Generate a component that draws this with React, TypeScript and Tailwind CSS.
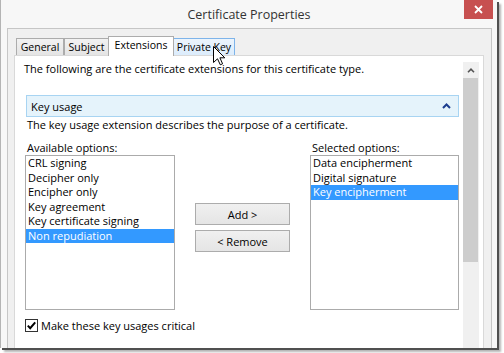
import React from 'react';

const available = ['CRL signing', 'Decipher only', 'Encipher only', 'Key agreement', 'Key certificate signing', 'Non repudiation'];
const chosen = ['Data encipherment', 'Digital signature', 'Key encipherment'];

const OptionList: React.FC<{ items: string[]; active: string; className: string }> = ({ items, active, className }) => (
  <div className={`h-[155px] border border-[#ababab] bg-white overflow-hidden ${className}`}>
    {items.map((item) => (
      <div
        key={item}
        className={`h-[14.5px] leading-[14.5px] pl-[2px] whitespace-nowrap ${item === active ? 'bg-[#3399ff] text-white' : 'text-black'}`}
      >
        {item}
      </div>
    ))}
  </div>
);

const Cursor = () => (
  <svg className="absolute left-[212px] top-[46px]" width="13" height="20" viewBox="0 0 13 20">
    <path d="M0.5 0.5 L0.5 16.5 L4.5 12.8 L7.3 18.8 L9.6 17.8 L6.9 11.8 L11.8 11.8 Z" fill="#fff" stroke="#000" strokeWidth="1" strokeLinejoin="round" />
  </svg>
);

export default function App() {
  return (
    <div className="w-[504px] h-[353px] bg-white font-['Open_Sans',sans-serif] text-[11px] text-black overflow-hidden">
      {/* dialog window, cropped at the bottom */}
      <div className="relative w-[497px] h-[348px] border-l border-[#b4b4b4] bg-[#f7f7f7] flex flex-col overflow-hidden shadow-[2px_2px_0_#505050,4px_4px_2px_rgba(0,0,0,0.3)]">
        {/* Title bar */}
        <div className="relative h-[28px] shrink-0 flex justify-center pt-[5px]">
          <span className="text-[12.5px] leading-[20px] text-[#333]">Certificate Properties</span>
          <div className="absolute right-[4px] top-0 w-[29px] h-[19px] bg-[#c75050] flex items-center justify-center">
            <svg width="9" height="9" viewBox="0 0 9 9">
              <path d="M1 1 L8 8 M8 1 L1 8" stroke="#fff" strokeWidth="1.8" />
            </svg>
          </div>
        </div>

        {/* Client area */}
        <div className="ml-[6px] w-[485px] h-[400px] shrink-0 border border-[#c6c6c6] bg-[#f0f0f0] flex flex-col pt-[7px]">
          {/* Tabs */}
          <div className="flex items-end h-[20px] ml-[8px] shrink-0 text-[10.5px]">
            <div className="w-[48px] h-[18px] border border-[#acacac] bg-linear-to-b from-[#f2f2f2] to-[#e4e4e4] flex items-center justify-center leading-none">
              General
            </div>
            <div className="w-[45px] h-[18px] border border-[#acacac] bg-linear-to-b from-[#f2f2f2] to-[#e4e4e4] flex items-center justify-center leading-none">
              Subject
            </div>
            <div className="relative z-10 -ml-px w-[66px] h-[20px] border border-b-0 border-[#acacac] bg-white flex items-center justify-center pb-[2px] leading-none">
              Extensions
            </div>
            <div className="-ml-px w-[62px] h-[18px] border border-[#7eb4ea] bg-linear-to-b from-[#ecf4fc] to-[#dcecfc] flex items-center justify-center leading-none">
              Private Key
            </div>
          </div>

          {/* Tab panel */}
          <div className="-mt-px ml-[6px] w-[470px] h-[400px] shrink-0 border border-[#d9d9d9] bg-white flex pt-[5px]">
            <div className="w-[448px] pl-[10px] pr-[4px] flex flex-col">
              <div className="leading-[15px] -ml-px whitespace-nowrap">
                The following are the certificate extensions for this certificate type.
              </div>

              <div className="mt-[19px] ml-px h-[22px] border border-[#a8d4f2] bg-[#e5f3fb] flex items-center justify-between pl-[4px] pr-[7px]">
                <span className="leading-none">Key usage</span>
                <svg width="9" height="6" viewBox="0 0 9 6">
                  <path d="M1 5 L4.5 1.5 L8 5" fill="none" stroke="#1c3d8f" strokeWidth="2" />
                </svg>
              </div>

              <div className="leading-[15px] ml-[2px] whitespace-nowrap">
                The key usage extension describes the purpose of a certificate.
              </div>

              <div className="mt-[8px] flex">
                <div className="flex flex-col">
                  <div className="leading-[15px] ml-[2px]">Available options:</div>
                  <OptionList items={available} active="Non repudiation" className="w-[150px]" />
                </div>

                <div className="ml-[20px] w-[95px] pt-[63px] flex flex-col gap-[5px]">
                  <button className="h-[22px] border border-[#acacac] bg-linear-to-b from-[#f0f0f0] to-[#e5e5e5] leading-none text-black">
                    Add &gt;
                  </button>
                  <button className="h-[22px] border border-[#acacac] bg-linear-to-b from-[#f0f0f0] to-[#e5e5e5] leading-none text-black">
                    &lt; Remove
                  </button>
                </div>

                <div className="ml-[20px] flex flex-col">
                  <div className="leading-[15px] ml-[2px]">Selected options:</div>
                  <OptionList items={chosen} active="Key encipherment" className="w-[149px]" />
                </div>
              </div>

              <div className="mt-[8px] flex items-center gap-[3px]">
                <div className="w-[13px] h-[13px] border border-[#333] bg-white flex items-center justify-center">
                  <svg width="11" height="11" viewBox="0 0 11 11">
                    <path d="M1.8 5.6 L4.2 8.2 L9.2 2.4" fill="none" stroke="#000" strokeWidth="2" />
                  </svg>
                </div>
                <span className="leading-[15px]">Make these key usages critical</span>
              </div>
            </div>

            {/* Scrollbar */}
            <div className="w-[16px] mt-px bg-[#f0f0f0] flex flex-col">
              <div className="h-[16px] flex items-center justify-center">
                <svg width="8" height="5" viewBox="0 0 8 5">
                  <path d="M1 4.2 L4 1.2 L7 4.2" fill="none" stroke="#555" strokeWidth="1.6" />
                </svg>
              </div>
              <div className="h-[184px] w-[15px] bg-[#cdcdcd]" />
            </div>
          </div>
        </div>

        <Cursor />
      </div>
    </div>
  );
}
